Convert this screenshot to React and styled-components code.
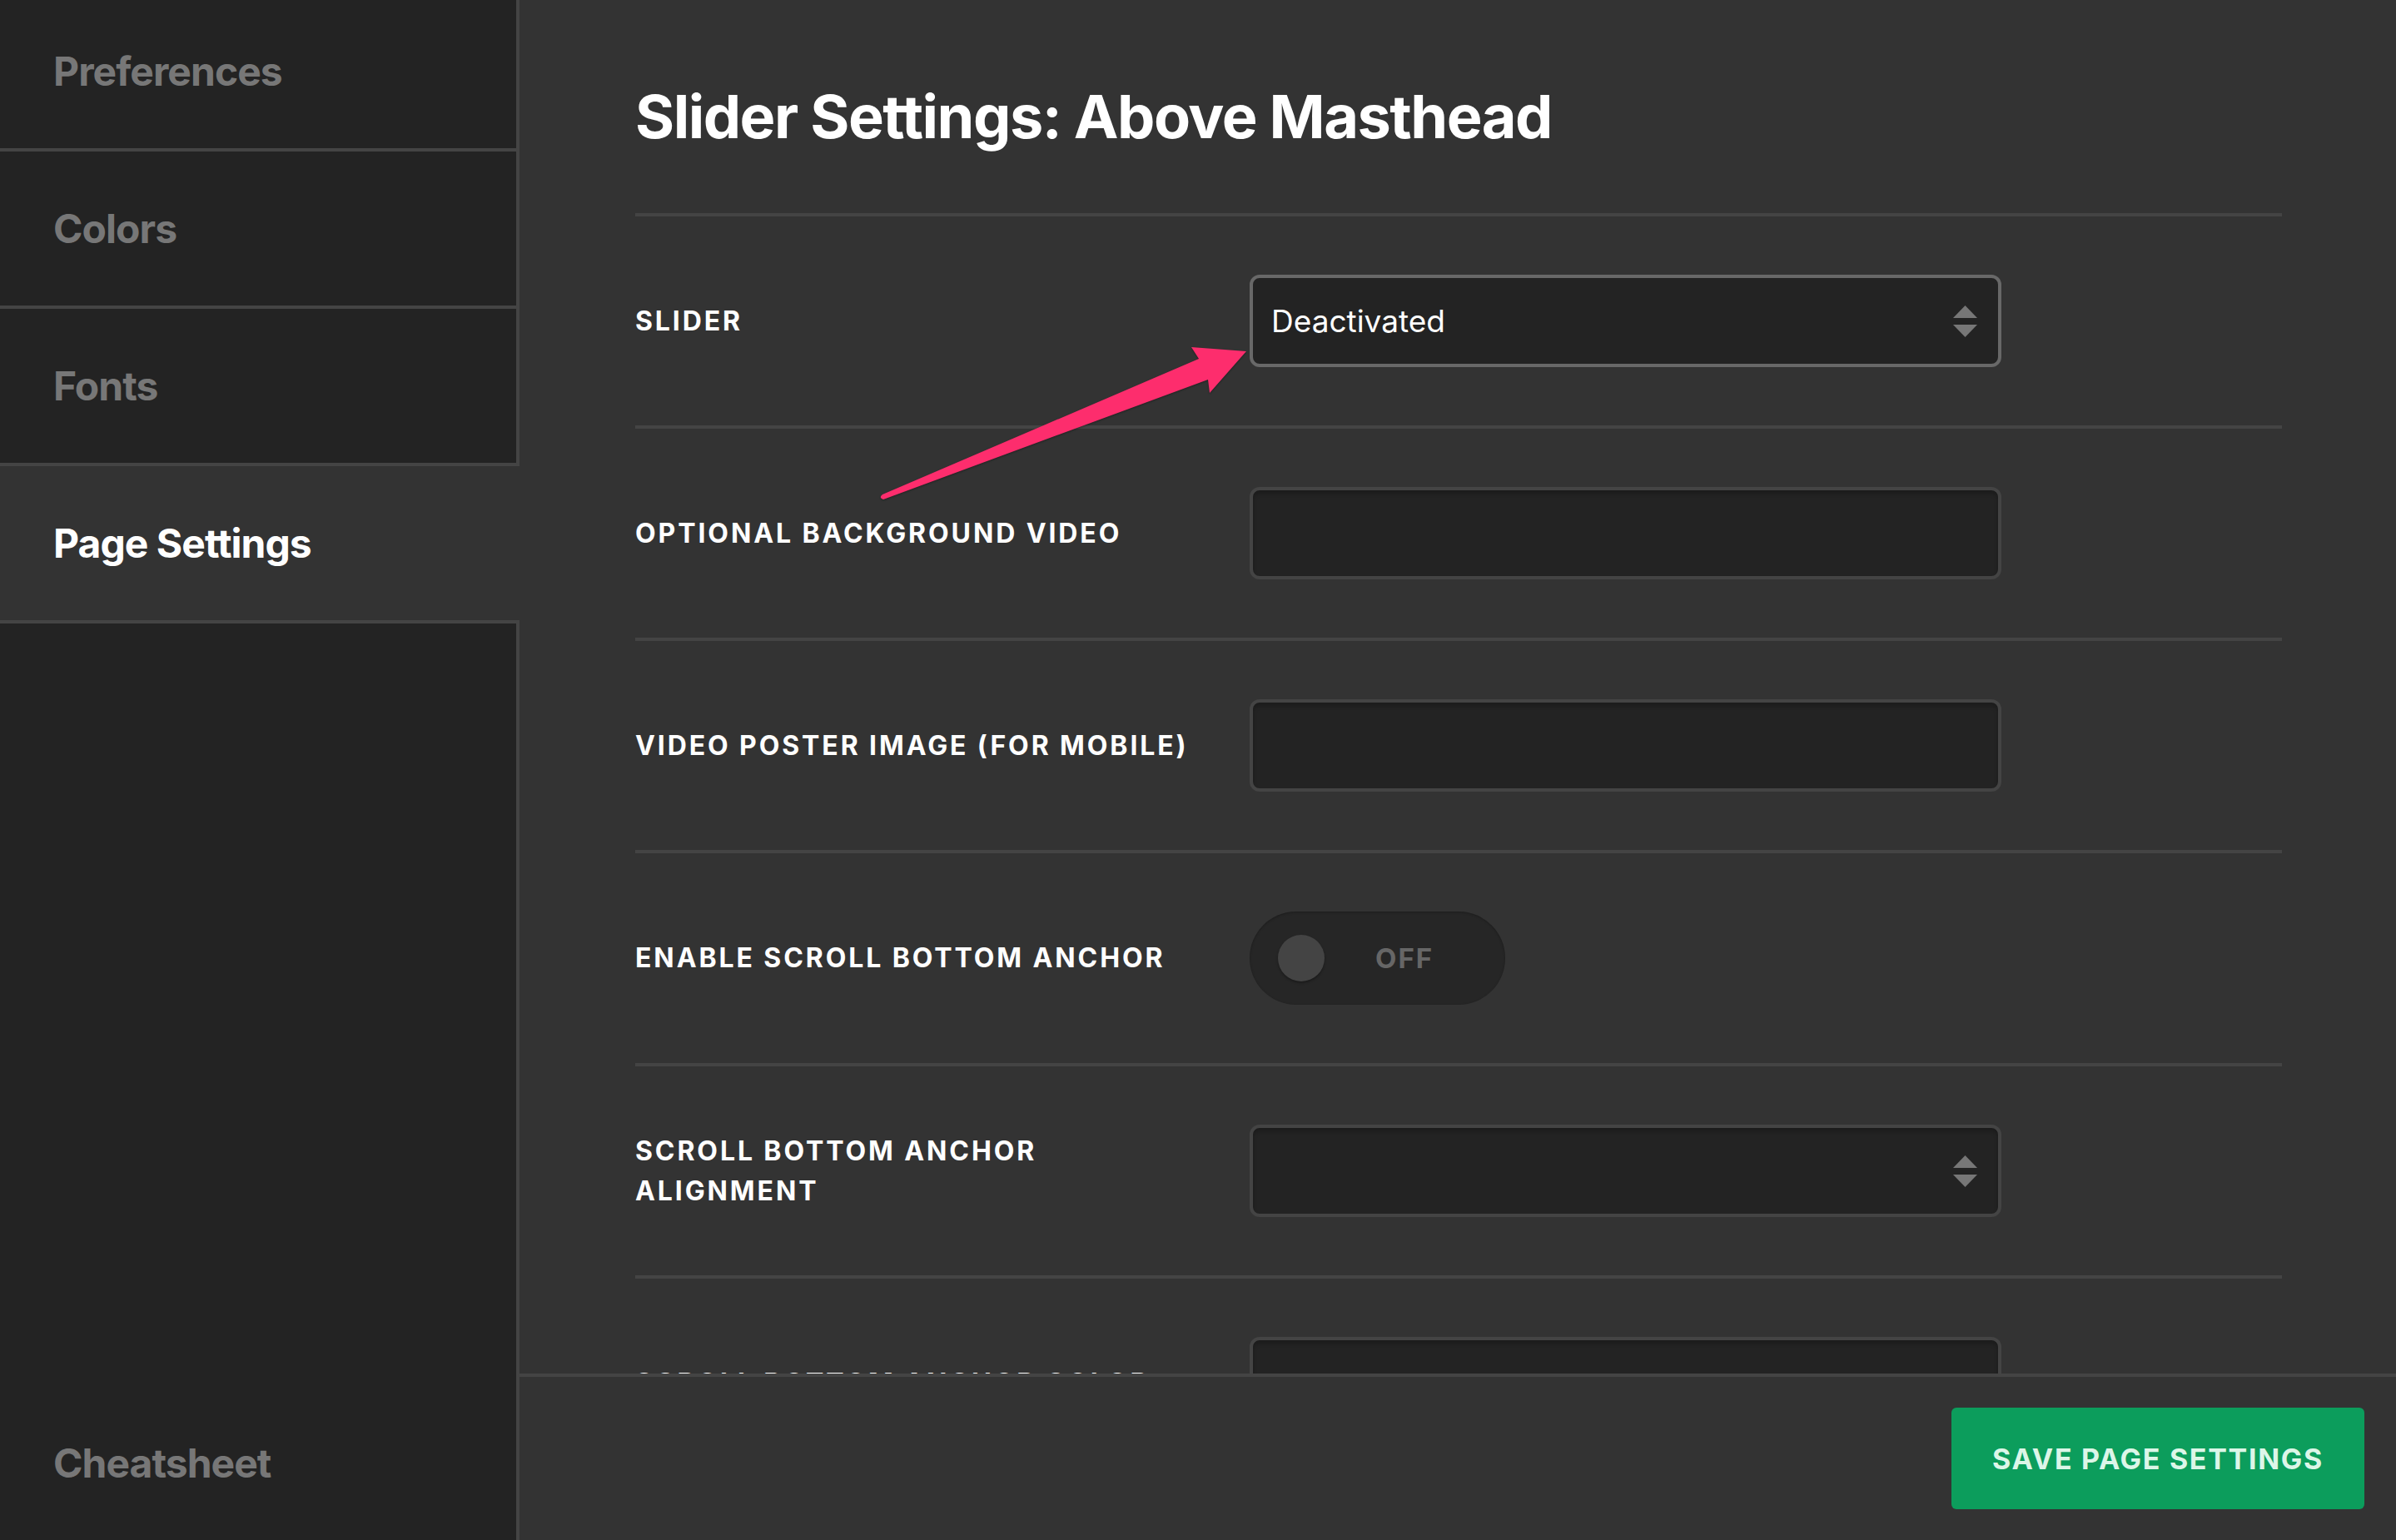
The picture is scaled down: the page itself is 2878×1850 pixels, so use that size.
import React from 'react';
import styled, { createGlobalStyle } from 'styled-components';

const GlobalStyle = createGlobalStyle`
  *, *::before, *::after {
    box-sizing: border-box;
  }

  html, body {
    margin: 0;
    padding: 0;
    background: #333;
  }

  body {
    font-family: Inter, "Noto Sans", "Liberation Sans", sans-serif;
    -webkit-font-smoothing: antialiased;
  }
`;

const Shell = styled.div`
  display: flex;
  height: 100vh;
  overflow: hidden;
  background: #333;
`;

const Sidebar = styled.aside`
  flex: none;
  width: 624px;
  display: flex;
  flex-direction: column;
  background: #232323;
  border-right: 4px solid #444;
`;

const Nav = styled.nav`
  display: flex;
  flex-direction: column;
  margin-top: -7px;
`;

const NavItem = styled.a`
  display: flex;
  align-items: center;
  height: 189px;
  padding-left: 64px;
  border-bottom: 4px solid #444;
  margin-right: ${p => (p.$active ? '-4px' : '0')};
  background: ${p => (p.$active ? '#333' : 'transparent')};
  color: ${p => (p.$active ? '#fff' : '#777')};
  font-size: 48px;
  font-weight: 700;
  letter-spacing: -0.02em;
  text-decoration: none;
  cursor: pointer;
`;

const Cheatsheet = styled(NavItem)`
  margin-top: auto;
  height: 185px;
  border-bottom: none;
`;

const Main = styled.main`
  flex: 1;
  min-width: 0;
  display: flex;
  flex-direction: column;
`;

const Scroller = styled.div`
  position: relative;
  flex: 1;
  overflow: hidden;
  padding: 97px 137px 0 139px;
`;

const Title = styled.h1`
  margin: 0 0 73px;
  color: #fff;
  font-size: 72px;
  line-height: 86px;
  font-weight: 700;
  letter-spacing: -1.5px;
`;

const Row = styled.div`
  display: flex;
  align-items: center;
  padding: 70px 0;
  border-top: 4px solid #444;
`;

const Label = styled.label`
  flex: none;
  width: 738px;
  padding-right: 48px;
  color: #fff;
  font-size: 32px;
  line-height: 48px;
  font-weight: 700;
  letter-spacing: 2.9px;
  text-transform: uppercase;
`;

const Field = styled.div`
  flex: none;
  width: 903px;
  height: 111px;
  display: flex;
  align-items: center;
  justify-content: space-between;
  padding: 0 25px 0 22px;
  background: #232323;
  border: 4px solid ${p => (p.$focused ? '#686868' : '#444')};
  border-radius: 12px;
  box-shadow: ${p => (p.$focused ? 'none' : 'inset 0 4px 5px rgba(0, 0, 0, 0.22)')};
  color: #fff;
  font-size: 37px;
  font-weight: 400;
`;

const Toggle = styled.div`
  flex: none;
  width: 307px;
  height: 112px;
  display: flex;
  align-items: center;
  padding-left: 34px;
  border-radius: 56px;
  background: #262626;
  box-shadow: inset 0 1px 3px rgba(0, 0, 0, 0.25);
`;

const Knob = styled.span`
  width: 56px;
  height: 56px;
  border-radius: 50%;
  background: #444;
  box-shadow: 0 2px 3px rgba(0, 0, 0, 0.3);
`;

const ToggleText = styled.span`
  margin-left: 61px;
  color: #666;
  font-size: 33px;
  font-weight: 700;
  letter-spacing: 0.06em;
`;

const ArrowMark = styled.svg`
  position: absolute;
  left: 0;
  top: 0;
  width: 1000px;
  height: 700px;
  pointer-events: none;
  filter: drop-shadow(0 1px 1px rgba(0, 0, 0, 0.35));
`;

const Footer = styled.footer`
  flex: none;
  height: 200px;
  display: flex;
  align-items: center;
  justify-content: flex-end;
  padding-right: 38px;
  background: #333;
  border-top: 4px solid #444;
`;

const SaveButton = styled.button`
  width: 496px;
  height: 122px;
  border: none;
  border-radius: 6px;
  background: #0c9d5c;
  color: #dcf6e8;
  font-family: inherit;
  font-size: 34px;
  font-weight: 700;
  letter-spacing: 0.05em;
  cursor: pointer;
`;

// up/down caret used by the select boxes
const SelectCaret = () => (
  <svg width="29" height="38" viewBox="0 0 29 38">
    <path d="M14.5 0 L29 15 L0 15 Z" fill="#777" />
    <path d="M0 23 L29 23 L14.5 38 Z" fill="#777" />
  </svg>
);

const navItems = ['Preferences', 'Colors', 'Fonts', 'Page Settings'];

const fields = [
  { label: 'Slider', type: 'select', value: 'Deactivated', focused: true },
  { label: 'Optional Background Video', type: 'text' },
  { label: 'Video Poster Image (for mobile)', type: 'text' },
  { label: 'Enable Scroll Bottom Anchor', type: 'toggle' },
  { label: 'Scroll Bottom Anchor Alignment', type: 'select', value: '' },
  { label: 'Scroll Bottom Anchor Color', type: 'text' },
];

function renderControl(f) {
  switch (f.type) {
    case 'toggle':
      return (
        <Toggle>
          <Knob />
          <ToggleText>OFF</ToggleText>
        </Toggle>
      );
    case 'select':
      return (
        <Field $focused={f.focused}>
          <span>{f.value}</span>
          <SelectCaret />
        </Field>
      );
    default:
      return <Field />;
  }
}

export default function App() {
  return (
    <Shell>
      <GlobalStyle />
      <Sidebar>
        <Nav>
          {navItems.map(item => (
            <NavItem key={item} $active={item === 'Page Settings'}>{item}</NavItem>
          ))}
        </Nav>
        <Cheatsheet>Cheatsheet</Cheatsheet>
      </Sidebar>

      <Main>
        <Scroller>
          <Title>Slider Settings: Above Masthead</Title>
          {fields.map(f => (
            <Row key={f.label}>
              <Label>{f.label}</Label>
              {renderControl(f)}
            </Row>
          ))}

          {/* pink callout pointing at the slider select */}
          <ArrowMark viewBox="0 0 1000 700">
            <path
              d="M873 422 L807 417 L816 431 L436 594 Q431 598 437 600 L827 456 L829 472 Z"
              fill="#fd2d6d"
            />
          </ArrowMark>
        </Scroller>

        <Footer>
          <SaveButton>SAVE PAGE SETTINGS</SaveButton>
        </Footer>
      </Main>
    </Shell>
  );
}
